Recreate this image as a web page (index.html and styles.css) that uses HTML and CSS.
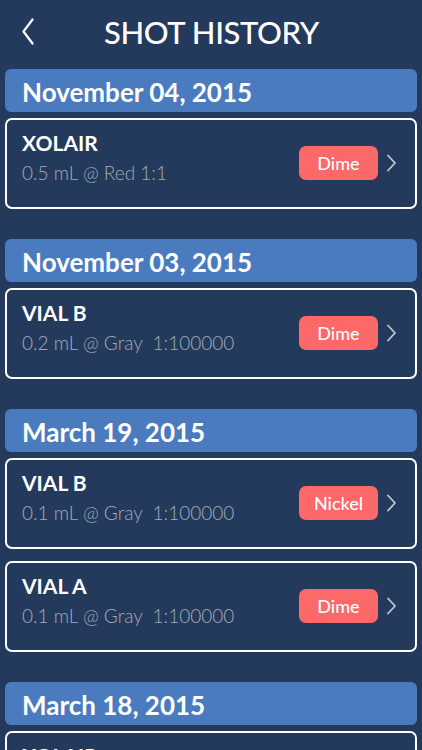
FILE: index.html
```html
<!DOCTYPE html>
<html lang="en">

<head>
    <meta charset="UTF-8">
    <meta name="viewport" content="width=device-width, initial-scale=1.0">
    <title>Shot History</title>
    <link rel="stylesheet" href="styles.css">
</head>

<body>

    <header class="top-bar">
        <a class="back" href="#">
            <svg width="13" height="27" viewBox="0 0 13 27">
                <path d="M11.5 1.5 L2.5 13.5 L11.5 25.5" fill="none" stroke="#fff" stroke-width="2.2" stroke-linecap="round" stroke-linejoin="round"/>
            </svg>
        </a>
        <h1>SHOT HISTORY</h1>
    </header>

    <main class="history">
        <section class="day">
            <h2 class="date">November 04, 2015</h2>
            <div class="shot">
                <div class="shot-info">
                    <div class="shot-name">XOLAIR</div>
                    <div class="shot-dose">0.5 mL @ Red 1:1</div>
                </div>
                <span class="badge">Dime</span>
                <span class="chevron"><svg width="11" height="18" viewBox="0 0 11 18"><path d="M2 1.5 L9 9 L2 16.5" fill="none" stroke="#c4c9d1" stroke-width="1.8" stroke-linecap="round" stroke-linejoin="round"/></svg></span>
            </div>
        </section>

        <section class="day">
            <h2 class="date">November 03, 2015</h2>
            <div class="shot">
                <div class="shot-info">
                    <div class="shot-name">VIAL B</div>
                    <div class="shot-dose">0.2 mL @ Gray&nbsp; 1:100000</div>
                </div>
                <span class="badge">Dime</span>
                <span class="chevron"><svg width="11" height="18" viewBox="0 0 11 18"><path d="M2 1.5 L9 9 L2 16.5" fill="none" stroke="#c4c9d1" stroke-width="1.8" stroke-linecap="round" stroke-linejoin="round"/></svg></span>
            </div>
        </section>

        <section class="day">
            <h2 class="date">March 19, 2015</h2>
            <div class="shot">
                <div class="shot-info">
                    <div class="shot-name">VIAL B</div>
                    <div class="shot-dose">0.1 mL @ Gray&nbsp; 1:100000</div>
                </div>
                <span class="badge">Nickel</span>
                <span class="chevron"><svg width="11" height="18" viewBox="0 0 11 18"><path d="M2 1.5 L9 9 L2 16.5" fill="none" stroke="#c4c9d1" stroke-width="1.8" stroke-linecap="round" stroke-linejoin="round"/></svg></span>
            </div>
            <div class="shot">
                <div class="shot-info">
                    <div class="shot-name">VIAL A</div>
                    <div class="shot-dose">0.1 mL @ Gray&nbsp; 1:100000</div>
                </div>
                <span class="badge">Dime</span>
                <span class="chevron"><svg width="11" height="18" viewBox="0 0 11 18"><path d="M2 1.5 L9 9 L2 16.5" fill="none" stroke="#c4c9d1" stroke-width="1.8" stroke-linecap="round" stroke-linejoin="round"/></svg></span>
            </div>
        </section>

        <section class="day">
            <h2 class="date">March 18, 2015</h2>
            <div class="shot">
                <div class="shot-info">
                    <div class="shot-name">XOLAIR</div>
                    <div class="shot-dose">0.5 mL @ Red 1:1</div>
                </div>
                <span class="badge">Dime</span>
                <span class="chevron"><svg width="11" height="18" viewBox="0 0 11 18"><path d="M2 1.5 L9 9 L2 16.5" fill="none" stroke="#c4c9d1" stroke-width="1.8" stroke-linecap="round" stroke-linejoin="round"/></svg></span>
            </div>
        </section>
    </main>

</body>

</html>
```

FILE: styles.css
```css
html,
body {
    height: 100%;
    overflow: hidden;
}

body {
    margin: 0;
    font-family: Lato, "Open Sans", sans-serif;
    background-color: #243a5c;
    color: #fff;
}

.top-bar {
    display: flex;
    align-items: center;
    height: 69px;
    padding: 0 20px 0 21px;
    box-sizing: border-box;
}

.back {
    display: flex;
    width: 13px;
    margin-top: -6px;
}

.top-bar h1 {
    flex: 1;
    margin: -5px 13px 0 0;
    text-align: center;
    font-size: 31px;
    font-weight: 500;
    letter-spacing: -0.4px;
}

.history {
    padding: 0 5px;
}

.day {
    display: flex;
    flex-direction: column;
    gap: 12px;
    margin-bottom: 30px;
}

.date {
    margin: 0 0 -6px;
    height: 43px;
    padding: 0 17px;
    background-color: #4a7bbf;
    border-radius: 6px;
    font-size: 26px;
    font-weight: 700;
    line-height: 46px;
    box-sizing: border-box;
}

.shot {
    display: flex;
    align-items: center;
    height: 91px;
    padding: 0 18px 0 15px;
    border: 2px solid #fff;
    border-radius: 7px;
    box-sizing: border-box;
}

.shot-info {
    flex: 1;
    margin-top: -14px;
}

.shot-name {
    font-size: 21px;
    font-weight: 700;
    line-height: 28px;
}

.shot-dose {
    margin-top: 4px;
    font-size: 19px;
    font-weight: 300;
    color: #a3abb8;
}

.badge {
    width: 79px;
    height: 34px;
    line-height: 34px;
    text-align: center;
    background-color: #fd6868;
    border-radius: 7px;
    font-size: 18px;
    font-weight: 500;
    margin-top: -2px;
}

.chevron {
    display: flex;
    margin-left: 8px;
    margin-top: -1px;
}
```
